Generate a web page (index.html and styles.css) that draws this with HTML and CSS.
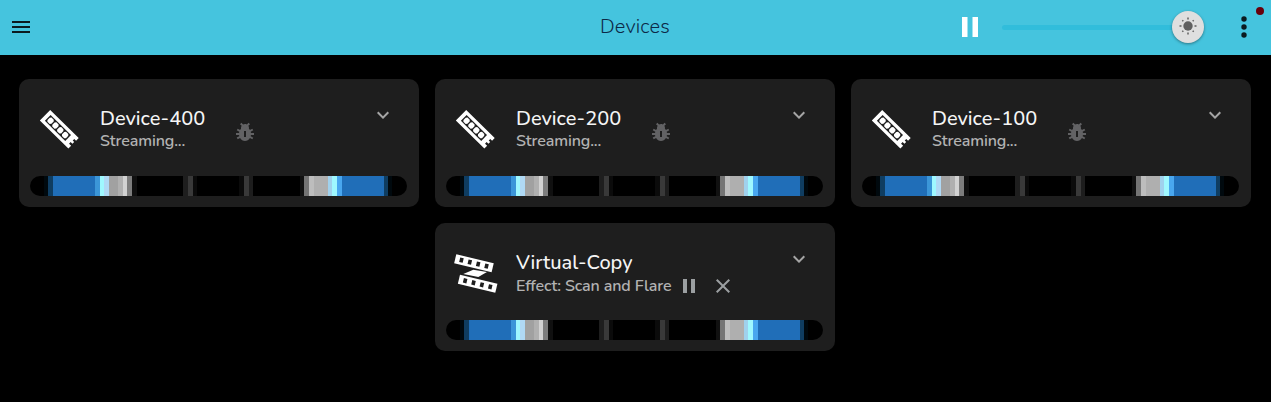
FILE: index.html
```html
<!DOCTYPE html>
<html lang="en">
<head>
<meta charset="utf-8">
<title>Devices</title>
<link rel="stylesheet" href="styles.css">
</head>
<body>
<svg class="defs" aria-hidden="true">
  <symbol id="strip" viewBox="0 0 48 48">
    <g transform="translate(14.2 5) rotate(44.5)">
      <path fill="#fff" d="M0 0H40V3.800H37.500V6H39.500V8.500H37V10.800H40V14.800H0Z"/>
      <rect x="3.800" y="3.300" width="28.600" height="8.200" fill="#1e1e1e"/>
      <path fill="#fff" d="M6.200 4.500h3.200l1.200 1.300v3.200l-1.200 1.300h-3.200l-1.200-1.300v-3.200zM13 4.500h3.200l1.200 1.300v3.200l-1.200 1.300h-3.200l-1.200-1.300v-3.200zM19.800 4.500h3.200l1.200 1.300v3.200l-1.200 1.300h-3.200l-1.200-1.300v-3.200zM26.600 4.500h3.200l1.200 1.300v3.200l-1.200 1.300h-3.200l-1.200-1.300v-3.200z"/>
    </g>
  </symbol>
  <symbol id="copy" viewBox="0 0 48 48">
    <g transform="translate(4.3 5.2) rotate(13.5)">
      <rect width="38.500" height="9.200" fill="#fff"/>
      <path fill="#1e1e1e" d="M4.600 2.300h3.600v4.600h-3.600zM13.200 2.300h3.600v4.600h-3.600zM21.800 2.300h3.600v4.600h-3.600zM30.400 2.300h3.600v4.600h-3.600z"/>
    </g>
    <g transform="translate(8 25.800) rotate(13.5)">
      <rect width="38.500" height="9.200" fill="#fff"/>
      <path fill="#1e1e1e" d="M4.600 2.300h3.600v4.600h-3.600zM13.200 2.300h3.600v4.600h-3.600zM21.800 2.300h3.600v4.600h-3.600zM30.400 2.300h3.600v4.600h-3.600z"/>
    </g>
    <path fill="#fff" d="M11.300 25L21.300 20.800L35 23L26.300 28Z"/>
  </symbol>
  <symbol id="bug" viewBox="0 0 24 24"><path d="M21 15v-2h-3.070c-.05-.39-.12-.77-.22-1.140l2.580-1.490-1-1.730L16.920 10c-.28-.48-.62-.91-.99-1.290.1-.56.2-1.690-.58-2.890L17 4.170l-1.410-1.410-1.720 1.700c-1.660-.9-3.290-.2-3.750.01L8.410 2.760 7 4.170l1.650 1.650c-.78 1.200-.68 2.340-.58 2.890-.37.38-.71.81-.99 1.290L4.710 8.630l-1 1.730 2.580 1.490c-.1.37-.17.75-.22 1.140H3v2h3.070c.05.39.12.77.22 1.140l-2.580 1.490 1 1.730L7.080 18c1.080 1.810 2.880 3 4.920 3s3.840-1.190 4.920-3l2.370 1.370 1-1.730-2.580-1.490c.1-.37.17-.75.22-1.140H21zm-8 2h-2v-6h2v6z"/></symbol>
  <symbol id="chevron" viewBox="0 0 24 24"><path d="M16.59 8.59 12 13.17 7.41 8.59 6 10l6 6 6-6z"/></symbol>
  <symbol id="pause" viewBox="0 0 24 24"><path d="M6 19h4V5H6v14zm8-14v14h4V5h-4z"/></symbol>
  <symbol id="close" viewBox="0 0 24 24"><path d="M19 6.41 17.59 5 12 10.59 6.41 5 5 6.41 10.59 12 5 17.59 6.41 19 12 13.41 17.59 19 19 17.59 13.41 12z"/></symbol>
</svg>
<header class="bar">
  <svg class="menu" viewBox="0 0 24 24"><path d="M3 18h18v-2H3v2zm0-5h18v-2H3v2zm0-7v2h18V6H3z"/></svg>
  <h1 class="title">Devices</h1>
  <div class="tools">
    <svg class="bar-pause" viewBox="0 0 16 20"><path d="M0 0h5.5v20H0zM10.5 0H16v20h-5.500z"/></svg>
    <div class="slider">
      <span class="track"></span>
      <span class="thumb"><svg class="sun" viewBox="-9 -9 18 18"><circle r="4.7"/><path d="M0-8.500V-6.500M0 8.500V6.500M-8.500 0H-6.500M8.500 0H6.500M-5.700-5.700l1 1M5.700-5.700l-1 1M-5.700 5.700l1-1M5.700 5.700l-1-1"/></svg></span>
    </div>
    <svg class="more" viewBox="0 0 8 24"><circle cx="4" cy="4" r="2.7"/><circle cx="4" cy="12" r="2.700"/><circle cx="4" cy="20" r="2.700"/></svg>
  </div>
  <span class="status"></span>
</header>
<main class="devices">
  <article class="card">
    <div class="head">
      <svg class="device-icon"><use href="#strip"/></svg>
      <div class="info"><h2 class="name">Device-400</h2><p class="state">Streaming...</p></div>
      <svg class="bug"><use href="#bug"/></svg>
      <svg class="chevron"><use href="#chevron"/></svg>
    </div>
    <div class="pixels"></div>
  </article>
  <article class="card">
    <div class="head">
      <svg class="device-icon"><use href="#strip"/></svg>
      <div class="info"><h2 class="name">Device-200</h2><p class="state">Streaming...</p></div>
      <svg class="bug"><use href="#bug"/></svg>
      <svg class="chevron"><use href="#chevron"/></svg>
    </div>
    <div class="pixels"></div>
  </article>
  <article class="card">
    <div class="head">
      <svg class="device-icon"><use href="#strip"/></svg>
      <div class="info"><h2 class="name">Device-100</h2><p class="state">Streaming...</p></div>
      <svg class="bug"><use href="#bug"/></svg>
      <svg class="chevron"><use href="#chevron"/></svg>
    </div>
    <div class="pixels"></div>
  </article>
  <article class="card">
    <div class="head">
      <svg class="device-icon"><use href="#copy"/></svg>
      <div class="info virtual"><h2 class="name">Virtual-Copy</h2><p class="state effect">Effect: Scan and Flare</p></div>
      <div class="controls"><svg class="control"><use href="#pause"/></svg><svg class="control"><use href="#close"/></svg></div>
      <svg class="chevron"><use href="#chevron"/></svg>
    </div>
    <div class="pixels"></div>
  </article>
</main>
</body>
</html>
```
FILE: styles.css
```css
* { box-sizing: border-box; }
body { margin: 0; height: 402px; overflow: hidden; background: #000; color: #f5f5f5; font-family: Nunito, "Open Sans", "Noto Sans", sans-serif; }
h1, h2, p { margin: 0; }
svg { display: block; flex: none; }
.defs { position: absolute; width: 0; height: 0; }
.bar { position: relative; display: grid; grid-template-columns: 1fr auto 1fr; align-items: center; height: 55px; padding: 0 23px 0 9px; background: #45c4de; }
.menu { width: 24px; height: 24px; margin-top: -1px; fill: #0b1b20; }
.title { width: 70px; margin: -2px 0 0 -14px; transform: translateX(13.500px); font-size: 20px; font-weight: 300; line-height: 28px; letter-spacing: .15px; white-space: nowrap; color: #0c2947; }
.tools { display: flex; align-items: center; justify-content: flex-end; margin-top: -1px; }
.bar-pause { width: 16px; height: 20px; margin-right: 24px; fill: #fff; }
.slider { display: flex; align-items: center; width: 202px; height: 32px; }
.track { width: 170px; height: 5px; border-radius: 3px 0 0 3px; background: #31bddb; }
.thumb { display: grid; place-items: center; width: 32px; height: 32px; border-radius: 50%; background: #dfdfdf; box-shadow: 0 1px 3px #0006; }
.sun { width: 18px; height: 18px; margin-top: -2px; fill: #606060; stroke: #606060; stroke-width: 1.5; }
.sun circle { stroke: none; }
.more { width: 8px; height: 24px; margin-left: 36px; fill: #0b1b20; }
.status { position: absolute; top: 7px; left: 1256px; width: 8px; height: 8px; border-radius: 50%; background: #68000c; }
.devices { display: flex; flex-wrap: wrap; justify-content: center; gap: 16px; padding: 24px 20px 0 19px; }
.card { width: 400px; height: 128px; padding: 26px 12px 11px 11px; border-radius: 10px; background: #1e1e1e; }
.head { display: flex; height: 71px; padding-left: 6px; }
.device-icon { width: 48px; height: 48px; }
.info { width: 125px; padding-top: 1px; margin-left: 16px; white-space: nowrap; }
.virtual { width: 157px; }
.name { font-size: 20px; font-weight: 500; line-height: 26px; }
.state { margin-top: -1px; font-size: 16px; font-weight: 600; line-height: 20px; letter-spacing: -.12px; color: #b2b2b2; }
.effect { margin-top: 0; }
.bug { width: 24px; height: 24px; margin: 15px 0 0 8px; fill: #626264; }
.controls { display: flex; gap: 10px; margin: 25px 0 0 4px; }
.control { width: 24px; height: 24px; fill: #9b9fa1; }
.chevron { width: 24px; height: 24px; margin-top: -2px; margin-left: auto; margin-right: 12px; fill: #a5a5a5; }
.pixels {
  height: 20px; border-radius: 10px;
  background: linear-gradient(90deg,
    #000 14px, #00090e 14px 18px, #0f3d61 18px 23px, #206eb8 23px 65px,
    #3b96d8 65px 70px, #9ff8ff 70px 74px, #b0d9f5 74px 79px, #a1a1a1 79px 88px,
    #b0b0b0 88px 93px, #d2d2d2 93px 97px, #7d7d7d 97px 102px, #101010 102px 107px,
    #000 107px 153px, #1e1e1e 153px 158px, #393939 158px 163px, #0b0b0b 163px 167px,
    #000 167px 209px, #0b0b0b 209px 214px, #393939 214px 219px, #1d1d1d 219px 223px,
    #000 223px 270px, #111 270px 274px, #747474 274px 279px, #bdbdbd 279px 284px,
    #afafaf 284px 298px, #a0d1ed 298px 302px, #9ff8ff 302px 307px, #49a7ef 307px 312px,
    #206eb8 312px 354px, #0f3d61 354px 358px, #00090e 358px 362px, #000 362px);
}
```
